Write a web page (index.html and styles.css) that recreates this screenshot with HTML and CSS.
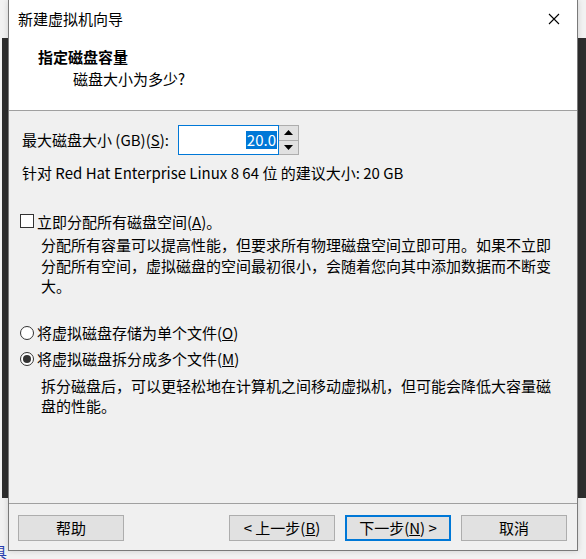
FILE: index.html
```html
<!DOCTYPE html>
<html lang="zh-CN">
<head>
<meta charset="utf-8">
<title>新建虚拟机向导</title>
<link rel="stylesheet" href="styles.css">
</head>
<body>
<div class="desktop">
  <div class="strip strip-left"></div>
  <div class="strip strip-right"></div>
  <div class="behind-char"><span>具</span></div>
  <div class="window">
    <div class="titlebar">
      <span class="title">新建虚拟机向导</span>
      <span class="close">
        <svg width="12" height="12" viewBox="0 0 12 12"><path d="M1 1 L11 11 M11 1 L1 11" stroke="#000" stroke-width="1.1" fill="none"/></svg>
      </span>
    </div>
    <div class="header">
      <div class="h-title">指定磁盘容量</div>
      <div class="h-sub">磁盘大小为多少?</div>
    </div>
    <div class="content">
      <div class="size-row">
        <span class="size-label">最大磁盘大小 (GB)(<u>S</u>):</span>
        <div class="spin">
          <div class="spin-input"><span class="sel">20.0</span></div>
          <div class="spin-btns">
            <span class="spin-btn"><svg width="9" height="5" viewBox="0 0 9 5"><path d="M0 5 L4.5 0 L9 5 Z" fill="#000"/></svg></span>
            <span class="spin-btn"><svg width="9" height="5" viewBox="0 0 9 5"><path d="M0 0 L9 0 L4.5 5 Z" fill="#000"/></svg></span>
          </div>
        </div>
      </div>
      <div class="recommend">针对 Red Hat Enterprise Linux 8 64 位 的建议大小: 20 GB</div>
      <div class="opt check-row"><span class="checkbox"></span><span>立即分配所有磁盘空间(<u>A</u>)。</span></div>
      <p class="desc desc-1">分配所有容量可以提高性能，但要求所有物理磁盘空间立即可用。如果不立即<br>分配所有空间，虚拟磁盘的空间最初很小，会随着您向其中添加数据而不断变<br>大。</p>
      <div class="opt radio-row radio-first"><span class="radio"></span><span>将虚拟磁盘存储为单个文件(<u>O</u>)</span></div>
      <div class="opt radio-row radio-second"><span class="radio on"></span><span>将虚拟磁盘拆分成多个文件(<u>M</u>)</span></div>
      <p class="desc desc-2">拆分磁盘后，可以更轻松地在计算机之间移动虚拟机，但可能会降低大容量磁<br>盘的性能。</p>
    </div>
    <div class="footer">
      <span class="btn">帮助</span>
      <span class="spacer"></span>
      <span class="btn">&lt; 上一步(<u>B</u>)</span>
      <span class="btn default">下一步(<u>N</u>) &gt;</span>
      <span class="btn">取消</span>
    </div>
  </div>
</div>
</body>
</html>
```

FILE: styles.css
```css
* { box-sizing: border-box; }
html, body { margin: 0; padding: 0; }
body {
  font-family: "Noto Sans CJK SC", "Noto Sans", sans-serif;
  font-size: 15px;
  color: #000;
  background: #f0f0f0;
}
.desktop {
  position: relative;
  width: 586px;
  height: 559px;
  overflow: hidden;
  background: #f2f2f2;
}
.strip {
  position: absolute;
  top: 38px;
  height: 460px;
  background: #2e2e2e;
}
.strip-left { left: 2px; width: 6px; }
.strip-right { left: 578px; width: 8px; }
.behind-char {
  position: absolute;
  left: 0;
  top: 544px;
  width: 8px;
  height: 15px;
  overflow: hidden;
  color: #2a3fb0;
  font-size: 15px;
  line-height: 15px;
}
.behind-char span { margin-left: -8px; }

.window {
  position: absolute;
  left: 8px;
  top: 0;
  width: 570px;
  height: 551px;
  border: 1px solid #7a7a7a;
  border-top: none;
  background: #f0f0f0;
  display: flex;
  flex-direction: column;
  box-shadow: 0 0 6px rgba(0,0,0,0.15);
}
.titlebar {
  height: 38px;
  background: #fff;
  display: flex;
  align-items: center;
  padding-left: 9px;
}
.title { flex: 1; line-height: 20px; }
.close {
  width: 46px;
  height: 38px;
  display: flex;
  align-items: center;
  justify-content: center;
  margin-right: 0;
}
.header {
  height: 73px;
  background: #fff;
  border-bottom: 1px solid #a0a0a0;
  padding-top: 8px;
}
.h-title {
  padding-left: 29px;
  font-weight: bold;
  line-height: 22px;
}
.h-sub {
  padding-left: 64px;
  line-height: 22px;
}
.content {
  flex: 1;
  padding: 14px 13px 0 13px;
}
.size-row {
  display: flex;
  align-items: center;
  height: 30px;
}
.size-label { width: 156px; line-height: 20px; }
.spin { display: flex; height: 30px; }
.spin-input {
  width: 101px;
  height: 30px;
  border: 1px solid #0078d7;
  background: #fff;
  display: flex;
  align-items: center;
  justify-content: flex-end;
  padding-right: 1px;
}
.sel {
  background: #0078d7;
  color: #fff;
  line-height: 18px;
  padding: 0 1px;
}
.spin-btns {
  width: 20px;
  height: 30px;
  display: flex;
  flex-direction: column;
  border: 1px solid #adadad;
  border-left: none;
}
.spin-btn {
  flex: 1;
  background: #e1e1e1;
  display: flex;
  align-items: center;
  justify-content: center;
}
.spin-btn + .spin-btn { border-top: 1px solid #adadad; }
.recommend {
  margin-top: 8px;
  line-height: 20px;
}
.opt {
  display: flex;
  align-items: center;
  height: 20px;
  margin-left: -2px;
}
.check-row { margin-top: 28px; }
.checkbox {
  width: 14px;
  height: 14px;
  border: 1px solid #333;
  background: #fff;
  margin-right: 3px;
}
.radio {
  width: 14px;
  height: 14px;
  border: 1px solid #333;
  border-radius: 50%;
  background: #fff;
  margin-right: 3px;
  display: flex;
  align-items: center;
  justify-content: center;
}
.radio.on::after {
  content: "";
  width: 8px;
  height: 8px;
  border-radius: 50%;
  background: #333;
}
.desc {
  margin: 0;
  padding-left: 19px;
  line-height: 20.5px;
  white-space: nowrap;
}
.desc-1 { margin-top: 4px; }
.radio-first { margin-top: 26px; }
.radio-second { margin-top: 6px; }
.desc-2 { margin-top: 7px; }

.footer {
  height: 47px;
  border-top: 1px solid #a0a0a0;
  display: flex;
  align-items: flex-start;
  padding: 11px 10px 0 9px;
  gap: 10px;
}
.spacer { flex: 1; }
.btn {
  width: 106px;
  height: 26px;
  background: #e1e1e1;
  border: 1px solid #adadad;
  display: flex;
  align-items: center;
  justify-content: center;
  line-height: 20px;
}
.btn.default { border: 2px solid #0078d7; }
```
